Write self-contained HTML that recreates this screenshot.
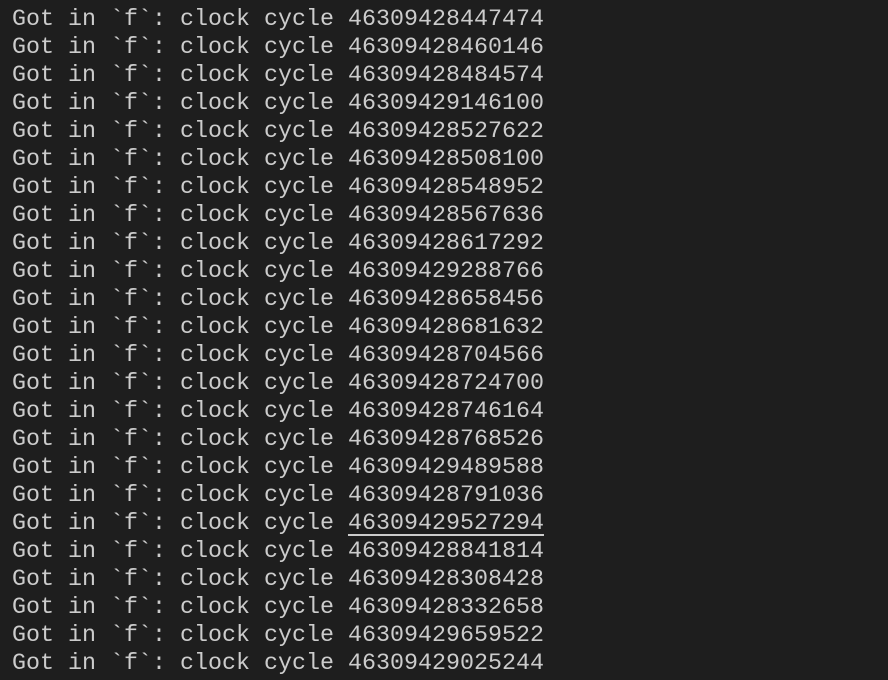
<!DOCTYPE html>
<html><head><style>
html,body{margin:0;padding:0;background:#1e1e1e;width:888px;height:680px;overflow:hidden}
#w{position:relative;width:888px;height:680px;overflow:hidden}
pre{margin:0;position:absolute;left:12px;top:6px;font-family:"Liberation Mono",monospace;font-size:23.33px;line-height:28px;color:#cccccc}
u{text-decoration:underline;text-underline-offset:5px;text-decoration-thickness:2px}
</style></head><body><div id="w">
<pre>Got in `f`: clock cycle 46309428447474
Got in `f`: clock cycle 46309428460146
Got in `f`: clock cycle 46309428484574
Got in `f`: clock cycle 46309429146100
Got in `f`: clock cycle 46309428527622
Got in `f`: clock cycle 46309428508100
Got in `f`: clock cycle 46309428548952
Got in `f`: clock cycle 46309428567636
Got in `f`: clock cycle 46309428617292
Got in `f`: clock cycle 46309429288766
Got in `f`: clock cycle 46309428658456
Got in `f`: clock cycle 46309428681632
Got in `f`: clock cycle 46309428704566
Got in `f`: clock cycle 46309428724700
Got in `f`: clock cycle 46309428746164
Got in `f`: clock cycle 46309428768526
Got in `f`: clock cycle 46309429489588
Got in `f`: clock cycle 46309428791036
Got in `f`: clock cycle <u>46309429527294</u>
Got in `f`: clock cycle 46309428841814
Got in `f`: clock cycle 46309428308428
Got in `f`: clock cycle 46309428332658
Got in `f`: clock cycle 46309429659522
Got in `f`: clock cycle 46309429025244
Got in `f`: clock cycle 46309428863112</pre>
</div></body></html>
